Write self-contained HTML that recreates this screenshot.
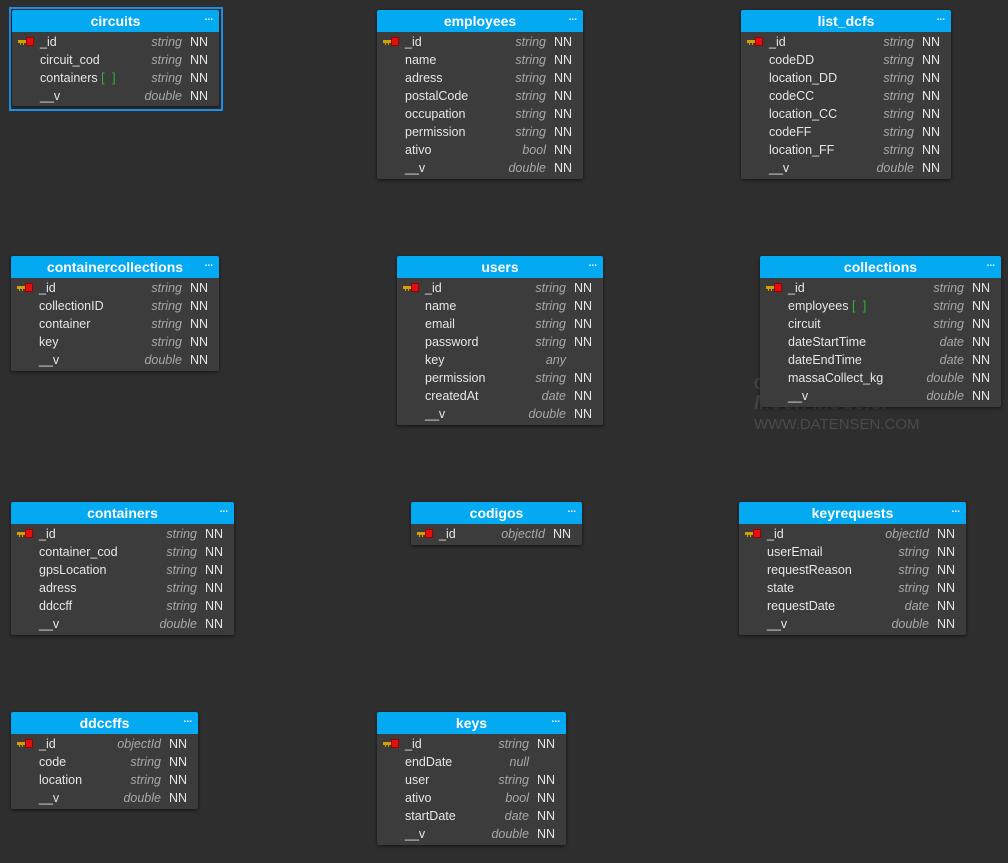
<!DOCTYPE html><html><head><style>
body{margin:0;width:1008px;height:863px;background:#2e2e2e;position:relative;overflow:hidden;font-family:"Liberation Sans",sans-serif;}
.t{position:absolute;background:#3c3c3c;border-radius:2px;box-shadow:0 1px 3px rgba(0,0,0,.6);}
.h{height:22px;background:#03a9f1;color:#fff;font-weight:bold;font-size:14px;line-height:23px;text-align:center;border-radius:2px 2px 0 0;position:relative;margin-bottom:1px}
.h i{position:absolute;right:6px;top:-4px;font-style:normal;font-size:10px;font-weight:bold}
.r{height:18px;position:relative;font-size:12.5px;line-height:18px;color:#e6e6e6}
.r .n{position:absolute;left:28px}
.r .y{position:absolute;right:37px;color:#a8a8a8;font-style:italic}
.r .k{position:absolute;right:11px;color:#e6e6e6}
.g{color:#2fb52f;letter-spacing:2px}
.key{position:absolute;left:6px;top:7px;width:10px;height:3px;background:#d4a000}
.key:after{content:"";position:absolute;left:8px;top:-3px;width:6px;height:7px;background:#e01010;border:1px solid #900}
.key:before{content:"";position:absolute;left:2px;top:3px;width:1px;height:2px;background:#d4a000;box-shadow:3px 0 #d4a000}
.sel{position:absolute;left:9px;top:7px;width:210px;height:100px;border:2px solid #1e90e8;}
.wm{position:absolute;left:754px;color:#4a4a4a;font-size:15px}
</style></head><body>
<div class="wm" style="top:376px;font-size:16px">C</div>
<div class="wm" style="top:392px;font-size:20px;font-style:italic;font-weight:bold;color:#444">Moon Modeler</div>
<div class="wm" style="top:416px">WWW.DATENSEN.COM</div>
<div class="sel"></div>

<div class="t" style="left:12px;top:10px;width:207px;height:96px"><div class="h">circuits<i>...</i></div>
<div class="r"><span class="key"></span><span class="n">_id</span><span class="y">string</span><span class="k">NN</span></div>
<div class="r"><span class="n">circuit_cod</span><span class="y">string</span><span class="k">NN</span></div>
<div class="r"><span class="n">containers <span class="g">[ ]</span></span><span class="y">string</span><span class="k">NN</span></div>
<div class="r"><span class="n">__v</span><span class="y">double</span><span class="k">NN</span></div></div>

<div class="t" style="left:377px;top:10px;width:206px;height:169px"><div class="h">employees<i>...</i></div>
<div class="r"><span class="key"></span><span class="n">_id</span><span class="y">string</span><span class="k">NN</span></div>
<div class="r"><span class="n">name</span><span class="y">string</span><span class="k">NN</span></div>
<div class="r"><span class="n">adress</span><span class="y">string</span><span class="k">NN</span></div>
<div class="r"><span class="n">postalCode</span><span class="y">string</span><span class="k">NN</span></div>
<div class="r"><span class="n">occupation</span><span class="y">string</span><span class="k">NN</span></div>
<div class="r"><span class="n">permission</span><span class="y">string</span><span class="k">NN</span></div>
<div class="r"><span class="n">ativo</span><span class="y">bool</span><span class="k">NN</span></div>
<div class="r"><span class="n">__v</span><span class="y">double</span><span class="k">NN</span></div></div>

<div class="t" style="left:741px;top:10px;width:210px;height:169px"><div class="h">list_dcfs<i>...</i></div>
<div class="r"><span class="key"></span><span class="n">_id</span><span class="y">string</span><span class="k">NN</span></div>
<div class="r"><span class="n">codeDD</span><span class="y">string</span><span class="k">NN</span></div>
<div class="r"><span class="n">location_DD</span><span class="y">string</span><span class="k">NN</span></div>
<div class="r"><span class="n">codeCC</span><span class="y">string</span><span class="k">NN</span></div>
<div class="r"><span class="n">location_CC</span><span class="y">string</span><span class="k">NN</span></div>
<div class="r"><span class="n">codeFF</span><span class="y">string</span><span class="k">NN</span></div>
<div class="r"><span class="n">location_FF</span><span class="y">string</span><span class="k">NN</span></div>
<div class="r"><span class="n">__v</span><span class="y">double</span><span class="k">NN</span></div></div>

<div class="t" style="left:11px;top:256px;width:208px;height:115px"><div class="h">containercollections<i>...</i></div>
<div class="r"><span class="key"></span><span class="n">_id</span><span class="y">string</span><span class="k">NN</span></div>
<div class="r"><span class="n">collectionID</span><span class="y">string</span><span class="k">NN</span></div>
<div class="r"><span class="n">container</span><span class="y">string</span><span class="k">NN</span></div>
<div class="r"><span class="n">key</span><span class="y">string</span><span class="k">NN</span></div>
<div class="r"><span class="n">__v</span><span class="y">double</span><span class="k">NN</span></div></div>

<div class="t" style="left:397px;top:256px;width:206px;height:169px"><div class="h">users<i>...</i></div>
<div class="r"><span class="key"></span><span class="n">_id</span><span class="y">string</span><span class="k">NN</span></div>
<div class="r"><span class="n">name</span><span class="y">string</span><span class="k">NN</span></div>
<div class="r"><span class="n">email</span><span class="y">string</span><span class="k">NN</span></div>
<div class="r"><span class="n">password</span><span class="y">string</span><span class="k">NN</span></div>
<div class="r"><span class="n">key</span><span class="y">any</span></div>
<div class="r"><span class="n">permission</span><span class="y">string</span><span class="k">NN</span></div>
<div class="r"><span class="n">createdAt</span><span class="y">date</span><span class="k">NN</span></div>
<div class="r"><span class="n">__v</span><span class="y">double</span><span class="k">NN</span></div></div>

<div class="t" style="left:760px;top:256px;width:241px;height:151px"><div class="h">collections<i>...</i></div>
<div class="r"><span class="key"></span><span class="n">_id</span><span class="y">string</span><span class="k">NN</span></div>
<div class="r"><span class="n">employees <span class="g">[ ]</span></span><span class="y">string</span><span class="k">NN</span></div>
<div class="r"><span class="n">circuit</span><span class="y">string</span><span class="k">NN</span></div>
<div class="r"><span class="n">dateStartTime</span><span class="y">date</span><span class="k">NN</span></div>
<div class="r"><span class="n">dateEndTime</span><span class="y">date</span><span class="k">NN</span></div>
<div class="r"><span class="n">massaCollect_kg</span><span class="y">double</span><span class="k">NN</span></div>
<div class="r"><span class="n">__v</span><span class="y">double</span><span class="k">NN</span></div></div>

<div class="t" style="left:11px;top:502px;width:223px;height:133px"><div class="h">containers<i>...</i></div>
<div class="r"><span class="key"></span><span class="n">_id</span><span class="y">string</span><span class="k">NN</span></div>
<div class="r"><span class="n">container_cod</span><span class="y">string</span><span class="k">NN</span></div>
<div class="r"><span class="n">gpsLocation</span><span class="y">string</span><span class="k">NN</span></div>
<div class="r"><span class="n">adress</span><span class="y">string</span><span class="k">NN</span></div>
<div class="r"><span class="n">ddccff</span><span class="y">string</span><span class="k">NN</span></div>
<div class="r"><span class="n">__v</span><span class="y">double</span><span class="k">NN</span></div></div>

<div class="t" style="left:411px;top:502px;width:171px;height:43px"><div class="h">codigos<i>...</i></div>
<div class="r"><span class="key"></span><span class="n">_id</span><span class="y">objectId</span><span class="k">NN</span></div></div>

<div class="t" style="left:739px;top:502px;width:227px;height:133px"><div class="h">keyrequests<i>...</i></div>
<div class="r"><span class="key"></span><span class="n">_id</span><span class="y">objectId</span><span class="k">NN</span></div>
<div class="r"><span class="n">userEmail</span><span class="y">string</span><span class="k">NN</span></div>
<div class="r"><span class="n">requestReason</span><span class="y">string</span><span class="k">NN</span></div>
<div class="r"><span class="n">state</span><span class="y">string</span><span class="k">NN</span></div>
<div class="r"><span class="n">requestDate</span><span class="y">date</span><span class="k">NN</span></div>
<div class="r"><span class="n">__v</span><span class="y">double</span><span class="k">NN</span></div></div>

<div class="t" style="left:11px;top:712px;width:187px;height:97px"><div class="h">ddccffs<i>...</i></div>
<div class="r"><span class="key"></span><span class="n">_id</span><span class="y">objectId</span><span class="k">NN</span></div>
<div class="r"><span class="n">code</span><span class="y">string</span><span class="k">NN</span></div>
<div class="r"><span class="n">location</span><span class="y">string</span><span class="k">NN</span></div>
<div class="r"><span class="n">__v</span><span class="y">double</span><span class="k">NN</span></div></div>

<div class="t" style="left:377px;top:712px;width:189px;height:133px"><div class="h">keys<i>...</i></div>
<div class="r"><span class="key"></span><span class="n">_id</span><span class="y">string</span><span class="k">NN</span></div>
<div class="r"><span class="n">endDate</span><span class="y">null</span></div>
<div class="r"><span class="n">user</span><span class="y">string</span><span class="k">NN</span></div>
<div class="r"><span class="n">ativo</span><span class="y">bool</span><span class="k">NN</span></div>
<div class="r"><span class="n">startDate</span><span class="y">date</span><span class="k">NN</span></div>
<div class="r"><span class="n">__v</span><span class="y">double</span><span class="k">NN</span></div></div>
</body></html>
